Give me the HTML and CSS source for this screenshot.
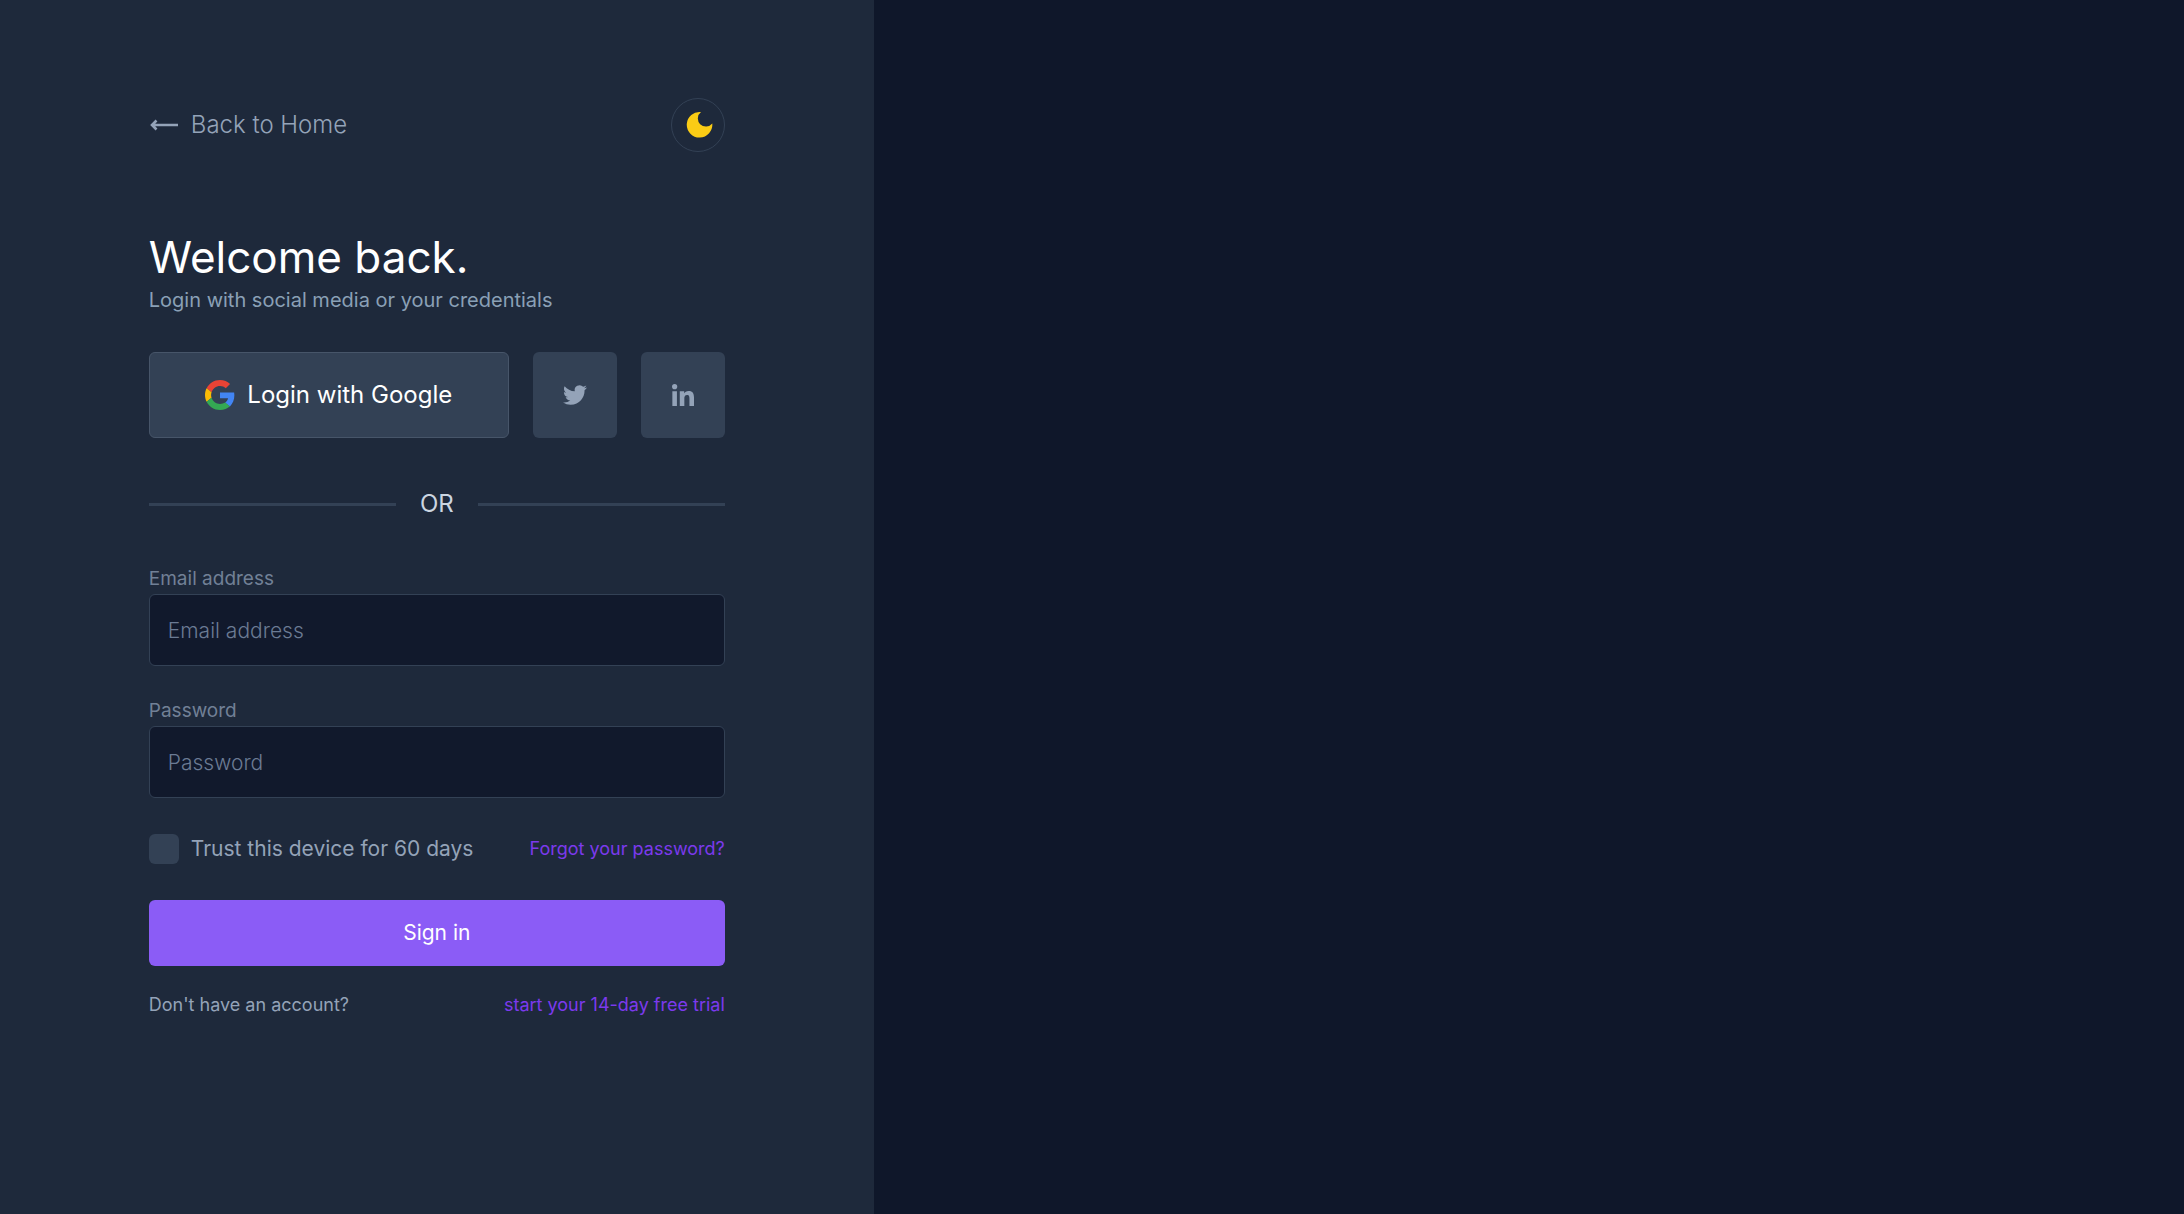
FILE: index.html
```html
<!DOCTYPE html>
<html lang="en">
<head>
<meta charset="utf-8">
<meta name="viewport" content="width=device-width, initial-scale=1">
<title>Sign in</title>
<link rel="stylesheet" href="styles.css">
</head>
<body>
<main class="panel">
  <div class="content">
    <header class="topbar">
      <a class="back" href="#">
        <svg class="back-icon" viewBox="0 0 30 30" aria-hidden="true"><path d="M29 15H4M7.500 10.500L3 15l4.500 4.500" fill="none" stroke="currentColor" stroke-width="2.600"/></svg>
        <span>Back to Home</span>
      </a>
      <button class="theme" type="button" aria-label="Toggle theme">
        <svg viewBox="0 0 30 30" width="30" height="30" aria-hidden="true"><path fill="currentColor" d="M18 2A8.150 8.150 0 1 0 29.300 13.600A12.800 12.800 0 1 1 18 2z"/></svg>
      </button>
    </header>

    <h1 class="title">Welcome back.</h1>
    <p class="subtitle">Login with social media or your credentials</p>

    <div class="social">
      <button class="social-button google" type="button">
        <svg width="30" height="30" viewBox="0 0 48 48" aria-hidden="true">
          <path fill="#ea4335" d="M24 9.500c3.540 0 6.710 1.220 9.210 3.600l6.850-6.850C35.900 2.380 30.470 0 24 0 14.620 0 6.510 5.380 2.560 13.220l7.980 6.190C12.430 13.720 17.740 9.500 24 9.500z"/>
          <path fill="#4285f4" d="M46.980 24.550c0-1.570-.15-3.090-.38-4.550H24v9.020h12.940c-.58 2.960-2.260 5.480-4.780 7.180l7.730 6c4.510-4.180 7.090-10.360 7.090-17.650z"/>
          <path fill="#fbbc05" d="M10.530 28.590c-.48-1.450-.76-2.990-.76-4.590s.27-3.140.76-4.590l-7.980-6.190C.92 16.460 0 20.120 0 24c0 3.880.92 7.540 2.560 10.780l7.970-6.190z"/>
          <path fill="#34a853" d="M24 48c6.480 0 11.930-2.130 15.890-5.810l-7.730-6c-2.150 1.450-4.920 2.300-8.160 2.300-6.260 0-11.570-4.220-13.470-9.910l-7.980 6.190C6.510 42.620 14.620 48 24 48z"/>
        </svg>
        <span>Login with Google</span>
      </button>
      <button class="social-button" type="button" aria-label="Login with Twitter">
        <svg width="24" height="24" viewBox="0 0 24 24" aria-hidden="true"><path fill="currentColor" d="M23.953 4.570a10 10 0 01-2.825.775 4.958 4.958 0 002.163-2.723c-.951.555-2.005.959-3.127 1.184a4.920 4.920 0 00-8.384 4.482C7.690 8.095 4.067 6.130 1.640 3.162a4.822 4.822 0 00-.666 2.475c0 1.710.870 3.213 2.188 4.096a4.904 4.904 0 01-2.228-.616v.060a4.923 4.923 0 003.946 4.827 4.996 4.996 0 01-2.212.085 4.936 4.936 0 004.604 3.417 9.867 9.867 0 01-6.102 2.105c-.390 0-.779-.023-1.170-.067a13.995 13.995 0 007.557 2.209c9.053 0 13.998-7.496 13.998-13.985 0-.210 0-.420-.015-.630A9.935 9.935 0 0024 4.590z"/></svg>
      </button>
      <button class="social-button" type="button" aria-label="Login with LinkedIn">
        <svg width="22" height="22" viewBox="0 0 24 24" aria-hidden="true"><path fill="currentColor" d="M5.370 24H.396V7.976H5.370zM2.880 5.791C1.290 5.791 0 4.474 0 2.883a2.882 2.882 0 015.763 0c0 1.591-1.290 2.908-2.883 2.908zM23.995 24h-4.964v-7.800c0-1.859-.037-4.243-2.587-4.243-2.587 0-2.983 2.019-2.983 4.109V24H8.492V7.976h4.775v2.186h.070c.665-1.260 2.288-2.589 4.710-2.589 5.037 0 5.963 3.317 5.963 7.625V24z"/></svg>
      </button>
    </div>

    <div class="divider"><span>OR</span></div>

    <form class="form">
      <div class="fields">
        <div class="field">
          <label class="label" for="email">Email address</label>
          <input class="input" id="email" type="email" placeholder="Email address">
        </div>
        <div class="field">
          <label class="label" for="password">Password</label>
          <input class="input" id="password" type="password" placeholder="Password">
        </div>
      </div>
      <div class="row">
        <label class="trust"><input class="check" type="checkbox"><span>Trust this device for 60 days</span></label>
        <a class="link" href="#">Forgot your password?</a>
      </div>
      <button class="submit" type="submit">Sign in</button>
      <div class="row signup">
        <span>Don't have an account?</span>
        <a class="link" href="#">start your 14-day free trial</a>
      </div>
    </form>
  </div>
</main>
</body>
</html>
```
FILE: styles.css
```css
*,
*::before,
*::after {
  box-sizing: border-box;
}

body {
  margin: 0;
  min-height: 100vh;
  background: #0f172a;
  color: #94a3b8;
  font-family: Inter, "Liberation Sans", sans-serif;
  font-size: 24px;
  line-height: 36px;
}

button,
input {
  font: inherit;
  color: inherit;
}

button {
  cursor: pointer;
}

svg {
  display: block;
  flex: none;
}

.panel {
  width: 40%;
  min-height: 100vh;
  padding: 98px 24px;
  background: #1e293b;
}

.content {
  max-width: 576px;
  margin: 0 auto;
}

.topbar {
  display: flex;
  align-items: center;
  justify-content: space-between;
}

.back {
  display: flex;
  align-items: center;
  gap: 12px;
  color: inherit;
  font-weight: 300;
  text-decoration: none;
}

.back-icon {
  width: 30px;
  height: 30px;
}

.theme {
  display: grid;
  place-items: center;
  width: 54px;
  height: 54px;
  padding: 0;
  border: 1px solid #334155;
  border-radius: 50%;
  background: none;
  color: #facc15;
}

.title {
  margin: 78px 0 0;
  color: #fff;
  font-size: 44px;
  font-weight: 400;
  line-height: 54px;
}

.subtitle {
  margin: 0;
  color: #8aa0b6;
  font-size: 20px;
  line-height: 32px;
}

.social {
  display: flex;
  gap: 24px;
  margin-top: 36px;
}

.social-button {
  display: flex;
  align-items: center;
  justify-content: center;
  gap: 12px;
  width: 84px;
  height: 86px;
  padding: 0;
  border: 0;
  border-radius: 6px;
  background: #334155;
}

.google {
  flex: 1;
  border: 1px solid #475569;
  color: #fff;
}

.divider {
  display: flex;
  align-items: center;
  gap: 24px;
  margin-top: 48px;
  color: #cbd5e1;
}

.divider::before,
.divider::after {
  content: "";
  flex: 1;
  height: 3px;
  background: #334155;
}

.form {
  display: flex;
  flex-direction: column;
  gap: 36px;
  margin-top: 42px;
}

.fields {
  display: flex;
  flex-direction: column;
  gap: 30px;
}

.field {
  display: flex;
  flex-direction: column;
}

.label {
  color: #718096;
  font-size: 19px;
  line-height: 30px;
}

.input {
  width: 100%;
  height: 72px;
  padding: 0 18px;
  border: 1px solid #334155;
  border-radius: 6px;
  background: #11192c;
  font-size: 21px;
  font-weight: 300;
}

.input::placeholder {
  color: #6b7b94;
  opacity: 1;
}

.row {
  display: flex;
  align-items: center;
  justify-content: space-between;
  font-size: 18px;
  line-height: 30px;
}

.trust {
  display: flex;
  align-items: center;
  gap: 12px;
  font-size: 21px;
}

.check {
  appearance: none;
  width: 30px;
  height: 30px;
  margin: 0;
  border-radius: 6px;
  background: #334155;
}

.check:checked {
  background: #8b5cf6;
}

.link {
  color: #7c3aed;
  text-decoration: none;
}

.submit {
  height: 66px;
  padding: 0;
  border: 0;
  border-radius: 6px;
  background: #8b5cf6;
  color: #fff;
  font-size: 21px;
}

.signup {
  margin-top: -12px;
}
```
